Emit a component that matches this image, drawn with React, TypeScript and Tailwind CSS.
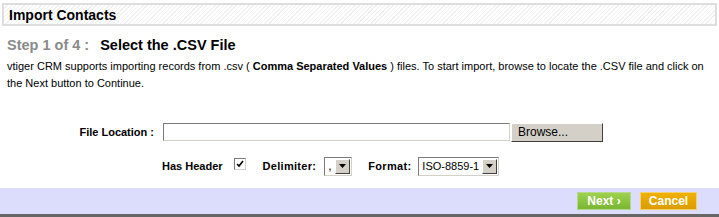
import React from "react";

const font = "font-['Liberation_Sans',Arial,sans-serif]";

const SelectArrow = () => (
  <span className="flex h-[15px] w-[15px] items-center justify-center border border-t-white border-l-white border-r-[#404040] border-b-[#404040] bg-[#d4d0c8]">
    <svg width="7" height="4" viewBox="0 0 7 4">
      <path d="M0 0h7L3.5 4z" fill="#000" />
    </svg>
  </span>
);

export default function App() {
  return (
    <div className={`${font} h-[217px] w-[719px] bg-white text-black`}>
      {/* title bar */}
      <div className="pt-[3px] px-[2px]">
        <div className="flex h-[23px] items-center border-2 border-[#dedede] bg-[repeating-linear-gradient(135deg,#ffffff_0px,#ffffff_2px,#f1f1f1_2px,#f1f1f1_3px)] pl-[5px]">
          <span className="text-[14px] font-bold leading-none">Import Contacts</span>
        </div>
      </div>

      {/* step heading */}
      <div className="mt-[12px] flex items-baseline pl-[7px] text-[14.5px] font-bold leading-none">
        <span className="text-[#8a8a8a]">Step 1 of 4 :</span>
        <span className="ml-[11px]">Select the .CSV File</span>
      </div>

      {/* description */}
      <p className="mt-[5px] pl-[7px] pr-[4px] text-[11px] leading-[17px]">
        vtiger CRM supports importing records from .csv ( <b>Comma Separated Values</b> ) files. To start import, browse to locate the .CSV file and click on the Next button to Continue.
      </p>

      {/* file location */}
      <div className="mt-[31px] flex items-center">
        <label className="w-[154px] text-right text-[11px] font-bold">File Location :</label>
        <div className="ml-[9px] h-[18px] w-[347px] border border-t-[#7a7a7a] border-l-[#7a7a7a] border-b-[#d4d0c8] border-r-[#d4d0c8] bg-white" />
        <button className="ml-[1px] h-[19px] w-[92px] border border-t-white border-l-white border-r-[#404040] border-b-[#404040] bg-[#d4d0c8] pl-[6px] text-left text-[12px] leading-none">
          Browse...
        </button>
      </div>

      {/* options */}
      <div className="mt-[15px] flex items-center pl-[162px] text-[11px] font-bold">
        <span>Has Header</span>
        <span className="ml-[11px] mb-[5px] flex h-[12px] w-[12px] items-center justify-center border border-t-[#7a7a7a] border-l-[#7a7a7a] border-b-[#d4d0c8] border-r-[#d4d0c8] bg-white">
          <svg width="8" height="8" viewBox="0 0 8 8">
            <path d="M1 4l2 2 4-5" stroke="#000" strokeWidth="1.6" fill="none" />
          </svg>
        </span>
        <span className="ml-[17px] tracking-[0.3px]">Delimiter:</span>
        <div className="ml-[8px] flex h-[19px] w-[28px] items-center justify-between border border-t-[#7a7a7a] border-l-[#7a7a7a] border-b-[#d4d0c8] border-r-[#d4d0c8] bg-white pl-[3px] pr-[1px] font-normal">
          <span className="text-[12px] leading-none">,</span>
          <SelectArrow />
        </div>
        <span className="ml-[16px] tracking-[0.3px]">Format:</span>
        <div className="ml-[7px] flex h-[19px] w-[81px] items-center justify-between border border-t-[#7a7a7a] border-l-[#7a7a7a] border-b-[#d4d0c8] border-r-[#d4d0c8] bg-white pl-[3px] pr-[1px] font-normal">
          <span className="text-[11px] leading-none">ISO-8859-1</span>
          <SelectArrow />
        </div>
      </div>

      {/* bottom bar */}
      <div className="mt-[12px] flex h-[26px] items-center justify-end gap-[9px] bg-[#dcdcfc] pr-[22px]">
        <button className="h-[18px] w-[54px] border border-[#b6d88a] bg-[linear-gradient(#9ed24e,#7ab632)] text-[12px] font-bold leading-none text-white">
          Next ›
        </button>
        <button className="h-[18px] w-[57px] border border-[#f3d070] bg-[linear-gradient(#f0b000,#dc9c00)] text-[12px] font-bold leading-none text-white">
          Cancel
        </button>
      </div>
      <div className="h-[4px] bg-[#666666]" />
    </div>
  );
}
